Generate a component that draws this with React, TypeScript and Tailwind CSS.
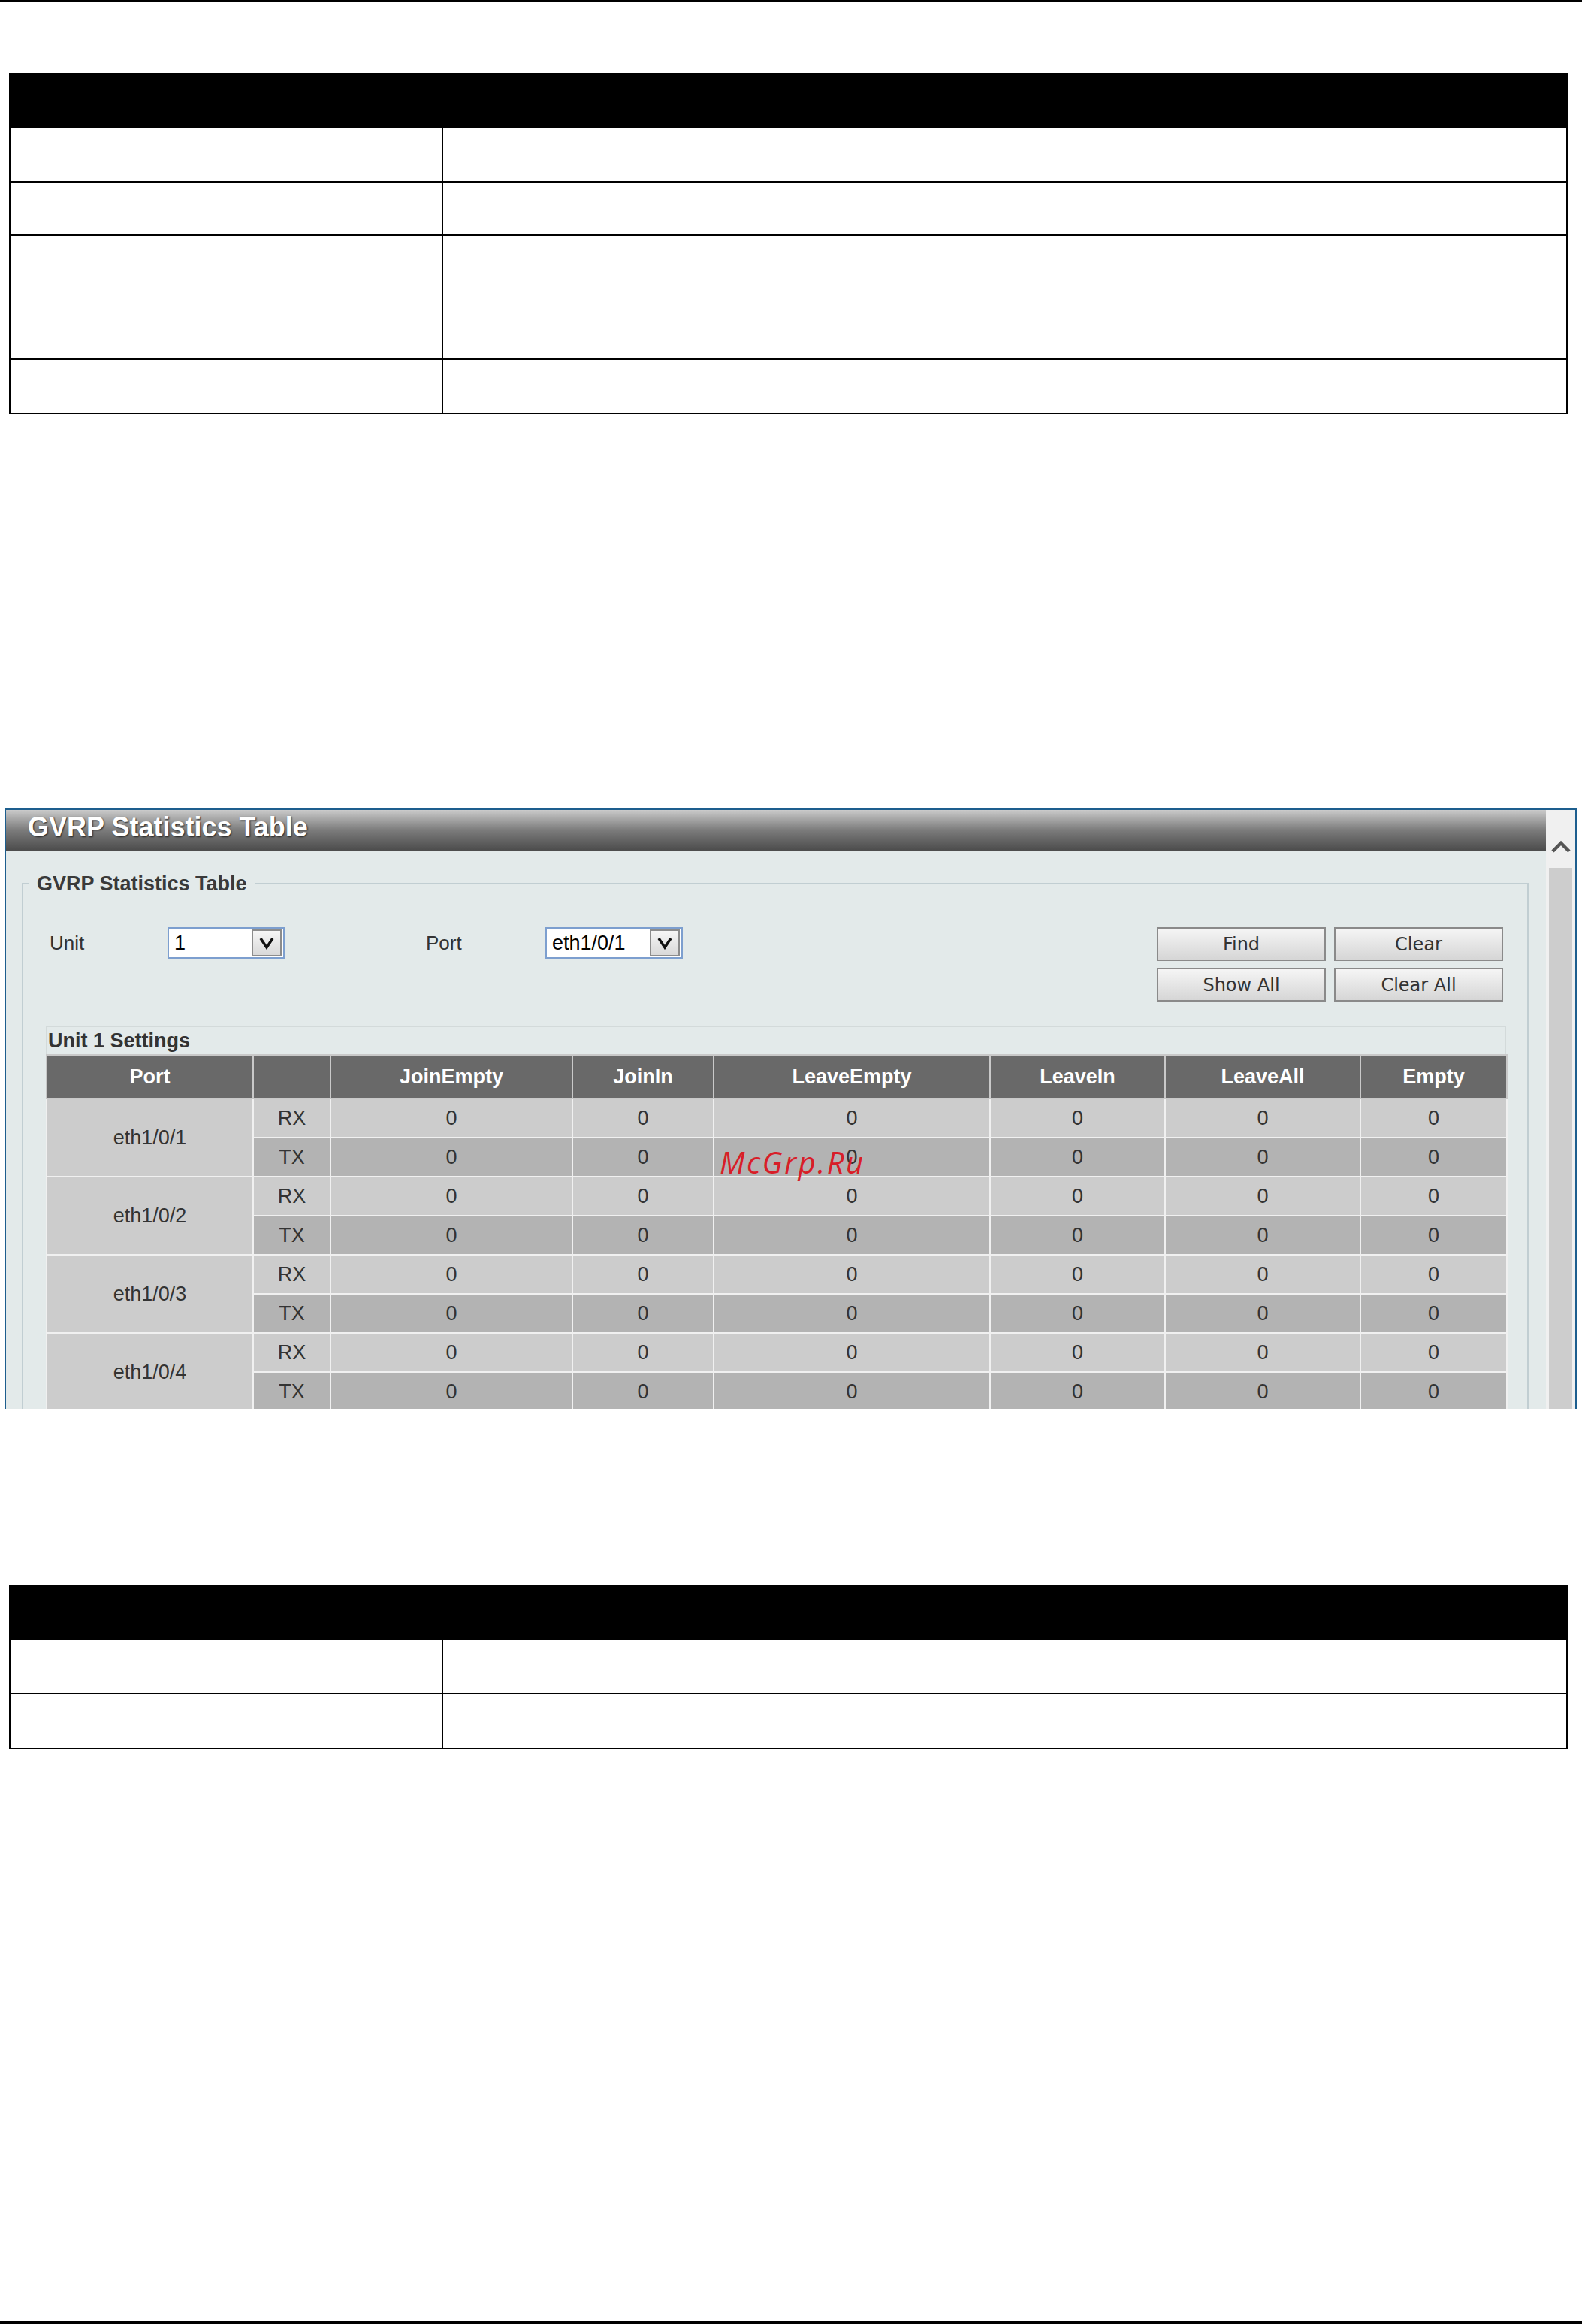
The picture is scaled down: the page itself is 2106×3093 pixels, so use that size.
import React from 'react'

const ports = ['eth1/0/1', 'eth1/0/2', 'eth1/0/3', 'eth1/0/4']
const statCols = ['JoinEmpty', 'JoinIn', 'LeaveEmpty', 'LeaveIn', 'LeaveAll', 'Empty']
const colWidths = [275, 103, 322, 188, 368, 233, 260, 195]

// Empty two-column parameter table, as in the manual page
function ParamTable({ header, rows }: { header: number; rows: number[] }) {
  return (
    <div className="ml-[12px] w-[2075px] bg-black px-[2px] pb-[2px]" style={{ paddingTop: header }}>
      <div className="flex flex-col gap-[2px]">
        {rows.map((h, i) => (
          <div key={i} className="grid grid-cols-[574px_1fr] gap-[2px]">
            <div className="bg-white" style={{ height: h }} />
            <div className="bg-white" style={{ height: h }} />
          </div>
        ))}
      </div>
    </div>
  )
}

function DropArrow() {
  return (
    <div className="flex h-[36px] w-[40px] items-center justify-center border-2 border-[#8c8c8c] bg-linear-to-b from-[#f6f6f6] to-[#d9d9d9]">
      <svg width="22" height="18" viewBox="0 0 22 18">
        <polyline points="3,3 11,15 19,3" fill="none" stroke="#111" strokeWidth="3.5" strokeLinejoin="miter" />
      </svg>
    </div>
  )
}

function SelectBox({ value, width }: { value: string; width: number }) {
  return (
    <div
      className="flex h-[42px] items-center justify-between border-2 border-[#7d9fcf] bg-white pl-[7px] pr-[2px]"
      style={{ width }}
    >
      <span className="text-[27px] leading-none text-black">{value}</span>
      <DropArrow />
    </div>
  )
}

function Btn({ label }: { label: string }) {
  return (
    <button className="h-[45px] w-[225px] border-2 border-[#8a8a8a] bg-linear-to-b from-[#f5f5f5] to-[#d6d6d6] font-['DejaVu_Sans',sans-serif] text-[24px] text-[#333]">
      {label}
    </button>
  )
}

export default function App() {
  return (
    <div className="relative flex h-[3093px] w-[2106px] flex-col bg-white font-['Liberation_Sans',Arial,sans-serif]">
      <div className="h-[3px] w-full bg-black" />

      <div className="mt-[94px]">
        <ParamTable header={74} rows={[70, 69, 163, 70]} />
      </div>

      {/* GVRP Statistics Table panel */}
      <div className="mt-[525px] ml-[6px] flex h-[799px] w-[2093px] overflow-hidden border-2 border-b-0 border-[#1d5e8e]">
        <div className="flex w-[2050px] flex-col bg-[#e3eaea]">
          <div className="flex h-[54px] items-center bg-linear-to-b from-[#cbcbcb] via-[#7b7b7b] to-[#4c4c4c] pb-[8px] pl-[29px]">
            <span className="text-[36px] font-bold text-white [text-shadow:1px_1px_2px_#222]">GVRP Statistics Table</span>
          </div>

          <div className="pl-[21px]">
            <fieldset className="mt-[29px] w-[2006px] border-2 border-[#c1ced2] pb-[40px]">
              <legend className="ml-[8px] px-[10px] text-[27px] leading-[30px] font-bold text-[#3a3a3a]">
                GVRP Statistics Table
              </legend>

              <div className="flex items-start pt-[43px] pr-[32px] pl-[35px]">
                <div className="flex items-center">
                  <span className="w-[157px] text-[26px] text-[#333]">Unit</span>
                  <SelectBox value="1" width={156} />
                  <span className="ml-[188px] w-[159px] text-[26px] text-[#333]">Port</span>
                  <SelectBox value="eth1/0/1" width={183} />
                </div>
                <div className="ml-auto grid grid-cols-[225px_225px] gap-x-[11px] gap-y-[9px]">
                  <Btn label="Find" />
                  <Btn label="Clear" />
                  <Btn label="Show All" />
                  <Btn label="Clear All" />
                </div>
              </div>

              <div className="mt-[32px] ml-[30px] w-[1944px]">
                <div className="flex h-[38px] items-center border-2 border-b-0 border-[#d3dada] pl-[1px]">
                  <span className="text-[27px] font-bold text-[#333]">Unit 1 Settings</span>
                </div>
                <table className="w-[1944px] table-fixed border-collapse text-[27px] text-[#333]">
                  <colgroup>
                    {colWidths.map((w, i) => (
                      <col key={i} style={{ width: w }} />
                    ))}
                  </colgroup>
                  <thead>
                    <tr className="h-[58px] bg-[#696969] text-white">
                      <th className="border-2 border-[#c9c9c9] font-bold">Port</th>
                      <th className="border-2 border-[#c9c9c9]" />
                      {statCols.map((c) => (
                        <th key={c} className="border-2 border-[#c9c9c9] font-bold">
                          {c}
                        </th>
                      ))}
                    </tr>
                  </thead>
                  <tbody>
                    {ports.map((p) => (
                      <React.Fragment key={p}>
                        <tr className="h-[52px] bg-[#cccccc]">
                          <td rowSpan={2} className="border-2 border-[#f0f0f0] bg-[#cccccc] text-center">
                            {p}
                          </td>
                          <td className="border-2 border-[#f0f0f0] text-center">RX</td>
                          {statCols.map((c) => (
                            <td key={c} className="border-2 border-[#f0f0f0] text-center">
                              0
                            </td>
                          ))}
                        </tr>
                        <tr className="h-[52px] bg-[#b3b3b3]">
                          <td className="border-2 border-[#f0f0f0] text-center">TX</td>
                          {statCols.map((c) => (
                            <td key={c} className="border-2 border-[#f0f0f0] text-center">
                              0
                            </td>
                          ))}
                        </tr>
                      </React.Fragment>
                    ))}
                  </tbody>
                </table>
              </div>
            </fieldset>
          </div>
        </div>

        {/* scrollbar */}
        <div className="flex w-[39px] flex-col bg-[#f0f0f0]">
          <div className="flex h-[77px] justify-center pt-[40px]">
            <svg width="28" height="18" viewBox="0 0 28 18">
              <polyline points="3,15 14,4 25,15" fill="none" stroke="#555" strokeWidth="4.5" />
            </svg>
          </div>
          <div className="mx-[4px] flex-1 bg-[#cdcdcd]" />
        </div>
      </div>

      <div className="mt-[235px]">
        <ParamTable header={73} rows={[70, 71]} />
      </div>

      <div className="mt-auto h-[4px] w-full bg-black" />

      <span className="absolute top-[1517px] left-[958px] font-['Open_Sans',sans-serif] text-[40px] tracking-[2.5px] text-[#d81e28] italic">
        McGrp.Ru
      </span>
    </div>
  )
}
